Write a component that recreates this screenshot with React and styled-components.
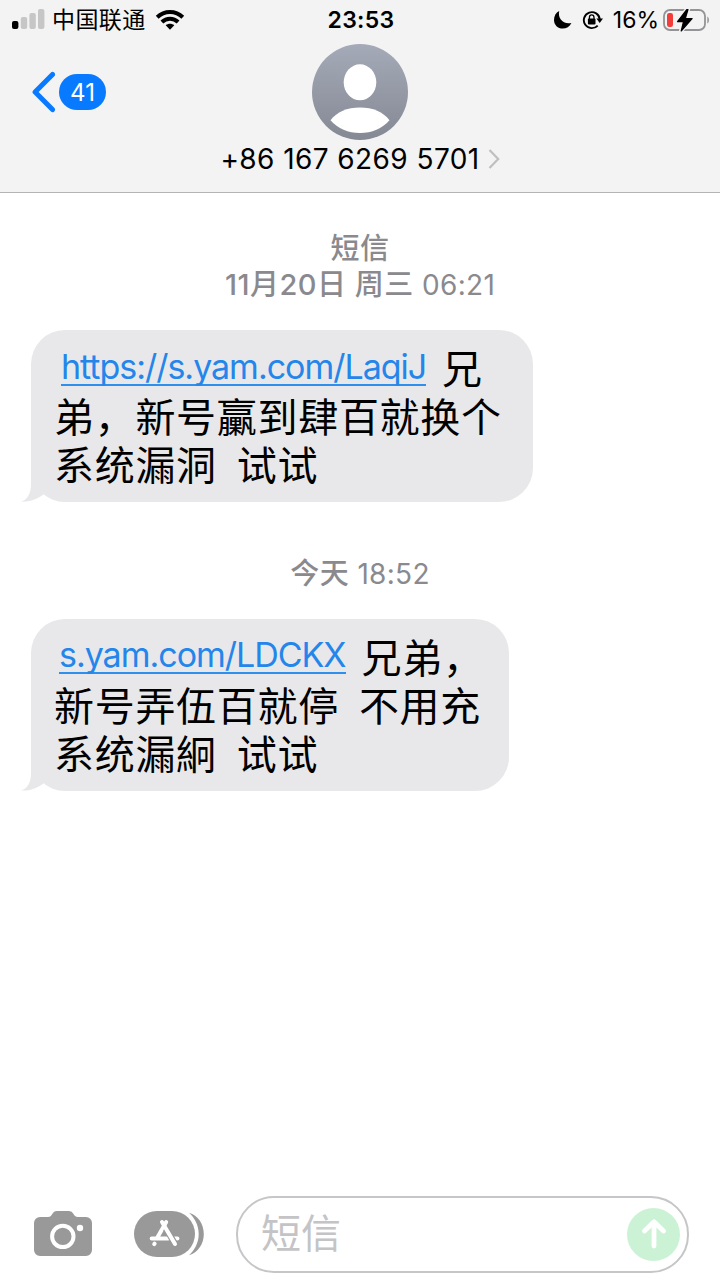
import styled, { createGlobalStyle } from "styled-components";

const GlobalStyle = createGlobalStyle`
* {
    box-sizing: border-box;
}
body {
    margin: 0;
    background: #fff;
    color: #000;
    font-family: Inter, "Noto Sans CJK SC", sans-serif;
}
`;

const messages = [
    {
        id: 1,
        service: "短信",
        date: "11月20日 周三",
        time: "06:21",
        width: 502,
        link: { text: "https://s.yam.com/LaqiJ", indent: 7, lift: 3 },
        first: "兄",
        rest: [["弟，新号臝到肆百就换个"], ["系统漏洞", "试试"]],
    },
    {
        id: 2,
        date: "今天",
        time: "18:52",
        width: 478,
        link: { text: "s.yam.com/LDCKX", indent: 5, lift: 4 },
        first: "兄弟，",
        rest: [["新号弄伍百就停", "不用充"], ["系统漏絅", "试试"]],
    },
];

/**
 * STATUS BAR ICONS
 */

const Signal = () => (
    <svg width="33" height="22" viewBox="0 0 33 22">
        <rect x="0" y="12" width="6.4" height="8" rx="2" fill="#000" />
        <rect x="8.8" y="8" width="6.4" height="12" rx="2" fill="#c6c6c7" />
        <rect x="17.4" y="4" width="6.4" height="16" rx="2" fill="#c6c6c7" />
        <rect x="26" y="0" width="6.4" height="20" rx="2" fill="#c6c6c7" />
    </svg>
);

const Wifi = () => (
    <svg width="30" height="22" viewBox="0 0 30 22">
        <g fill="none" stroke="#000" strokeWidth="4">
            <path d="M2.2 8.2C9.4 1.2 20.6 1.2 27.8 8.2" />
            <path d="M6.9 13C11.5 8.6 18.5 8.6 23.1 13" />
        </g>
        <path d="M10.7 16.3C13.2 14.3 16.8 14.3 19.3 16.3L15 20.8Z" />
    </svg>
);

const Moon = () => (
    <svg width="20" height="20" viewBox="0 0 20 20">
        <path d="M6.2 1C4.6 8.5 10 14.6 18.4 12.9C16.6 16.7 13.4 18.6 9.8 18.6C4.8 18.6 1 14.9 1 10C1 6 2.9 2.6 6.2 1Z" />
    </svg>
);

const RotationLock = () => (
    <svg width="22" height="20" viewBox="0 0 22 20">
        <path d="M15.7 15.6A8 8 0 1 1 17.8 9.4" fill="none" stroke="#000" strokeWidth="1.9" />
        <path d="M14.4 8.5H21L17.7 13Z" />
        <rect x="5.9" y="8.6" width="7.6" height="6" rx="1" />
        <path d="M7.4 9V7.4A2.3 2.5 0 0 1 12 7.4V9" fill="none" stroke="#000" strokeWidth="1.3" />
    </svg>
);

const Battery = () => (
    <svg width="47" height="26" viewBox="0 0 47 26">
        <rect x="1" y="3" width="41" height="20" rx="6" fill="none" stroke="#949496" strokeWidth="1.8" />
        <path d="M44.3 9.5C46.5 10.5 46.5 15.5 44.3 16.5Z" fill="#949496" />
        <rect x="4" y="6" width="6" height="14" rx="2.2" fill="#f23d3b" />
        <path d="M23.8 2L13.6 15H20L17.4 25L29.8 11.3H22.6L25.5 2Z" stroke="#f3f3f3" strokeWidth="3.4" fill="#f3f3f3" />
        <path d="M23.8 2.6L14.6 14.6H20.6L18.3 23.8L29 11.6H22.2L24.9 2.6Z" stroke="#000" strokeWidth="1.4" strokeLinejoin="round" />
    </svg>
);

/**
 * HEADER AND TOOLBAR ICONS
 */

const BackArrow = () => (
    <svg width="26" height="42" viewBox="0 0 26 42">
        <path d="M21.5 3.4L4.1 21L21.5 38.6" fill="none" stroke="#087aff" strokeWidth="5" strokeLinecap="round" strokeLinejoin="round" />
    </svg>
);

const Avatar = () => (
    <svg width="96" height="96" viewBox="0 0 96 96">
        <defs>
            <linearGradient id="avatar" x1="0" y1="0" x2="0" y2="1">
                <stop offset="0" stopColor="#a5aab8" />
                <stop offset="1" stopColor="#858994" />
            </linearGradient>
        </defs>
        <circle cx="48" cy="48" r="48" fill="url(#avatar)" />
        <ellipse cx="48" cy="38.3" rx="16.3" ry="18" fill="#fff" />
        <path d="M18.5 76.2C25 68 35 63.6 48 63.6S71 68 77.5 76.2C70 84.5 60 89 48 89S26 84.5 18.5 76.2Z" fill="#fff" />
    </svg>
);

const Chevron = () => (
    <svg width="12" height="20" viewBox="0 0 12 20">
        <path d="M1.5 1L10.2 10L1.5 19" fill="none" stroke="#bfbfc1" strokeWidth="2.2" />
    </svg>
);

const Tail = () => (
    <svg width="34" height="34" viewBox="0 0 34 34">
        <path d="M10 0V16C10 25 7 31.5 0 33.4C8 34.2 16 31.6 23 26L34 10V0Z" fill="#e8e8ea" />
    </svg>
);

const Camera = () => (
    <svg width="58" height="46" viewBox="0 0 58 46">
        <path d="M6 6H14C16.5 6 17.5 4.5 18.6 2.6C19.7 .7 21 0 23 0H34.5C36.7 0 38 .7 39.2 2.6C40.4 4.6 41.4 6 44 6H52A6 6 0 0 1 58 12V39A6 6 0 0 1 52 45H6A6 6 0 0 1 0 39V12A6 6 0 0 1 6 6Z" fill="#999" />
        <circle cx="28.8" cy="25.4" r="10.7" fill="none" stroke="#fff" strokeWidth="4" />
        <circle cx="46" cy="17" r="3.2" fill="#fff" />
    </svg>
);

const AppStore = () => (
    <svg width="70" height="46" viewBox="0 0 70 46">
        <rect x="0" y="0" width="61" height="46" rx="23" fill="#999" />
        <path d="M55 1.8C64 4.5 69.8 13 69.8 23S64 41.5 55 44.2C60.7 39.2 64.7 31.5 64.7 23S60.7 6.8 55 1.8Z" fill="#999" />
        <g fill="none" stroke="#fff" strokeWidth="4" strokeLinecap="round">
            <path d="M32.2 11L23.4 26.6" />
            <path d="M17.7 27.6H34.2" />
            <path d="M39.5 27.6H43.4" />
            <path d="M20.6 32.6L20.2 33.2" />
            <path d="M32 17.4L41 33" stroke="#999" strokeWidth="6.4" strokeLinecap="butt" />
            <path d="M28 11L41 33" />
        </g>
    </svg>
);

const SendArrow = () => (
    <svg width="26" height="32" viewBox="0 0 26 32">
        <path d="M13 28V4M3.5 13L13 3.8L22.5 13" fill="none" stroke="#fff" strokeWidth="4.8" strokeLinecap="round" strokeLinejoin="round" />
    </svg>
);

/**
 * ONE RECEIVED MESSAGE WITH ITS TIMESTAMP
 */

const Message = ({ service, date, time, width, link, first, rest }) => (
    <Entry>
        <Stamp>
            {service && <StampLine><b>{service}</b></StampLine>}
            <StampLine><b>{date}</b> {time}</StampLine>
        </Stamp>
        <Bubble $width={width}>
            <Line>
                <MessageLink href="#" $indent={link.indent} $lift={link.lift}>{link.text}</MessageLink>
                <span>{first}</span>
            </Line>
            {rest.map((parts) => (
                <Line key={parts[0]} $gap="20px">
                    {parts.map((part) => <span key={part}>{part}</span>)}
                </Line>
            ))}
            <TailHolder><Tail /></TailHolder>
        </Bubble>
    </Entry>
);

const App = () => {
    return (
        <Screen>
            <GlobalStyle />
            <Header>
                <StatusBar>
                    <StatusSide>
                        <Signal />
                        <Carrier>中国联通</Carrier>
                        <Wifi />
                    </StatusSide>
                    <Clock>23:53</Clock>
                    <StatusSide $end>
                        <Moon />
                        <RotationLock />
                        <Percent>16%</Percent>
                        <Battery />
                    </StatusSide>
                </StatusBar>
                <Contact>
                    <BackButton type="button">
                        <BackArrow />
                        <Unread>41</Unread>
                    </BackButton>
                    <Avatar />
                </Contact>
                <PhoneNumber>
                    <span>+86 167 6269 5701</span>
                    <Chevron />
                </PhoneNumber>
            </Header>
            <Thread>
                {messages.map((message) => <Message key={message.id} {...message} />)}
            </Thread>
            <Toolbar>
                <Camera />
                <AppStore />
                <Field>
                    <Placeholder>短信</Placeholder>
                    <SendButton type="button"><SendArrow /></SendButton>
                </Field>
            </Toolbar>
        </Screen>
    );
};

const Screen = styled.div`
width: 720px;
height: 1280px;
display: flex;
flex-direction: column;
overflow: hidden;

svg {
    display: block;
    flex: none;
}
`;

const Header = styled.header`
height: 193px;
flex: none;
background: #f3f3f3;
border-bottom: 1px solid #b4b4b5;
`;

const StatusBar = styled.div`
height: 40px;
display: grid;
grid-template-columns: 1fr auto 1fr;
align-items: center;
padding: 0 10px 0 12px;
white-space: nowrap;
`;

const StatusSide = styled.div`
display: flex;
align-items: center;
justify-content: ${({ $end }) => ($end ? "flex-end" : "flex-start")};
gap: 9px;
`;

const Carrier = styled.span`
margin-left: -2px;
font-size: 23px;
line-height: 40px;
letter-spacing: 0.4px;
`;

const Clock = styled.span`
font-size: 23px;
font-weight: 600;
letter-spacing: 0.3px;
`;

const Percent = styled.span`
margin-right: -5px;
font-size: 23px;
`;

const Contact = styled.div`
height: 100px;
padding-top: 4px;
display: grid;
grid-template-columns: 1fr 96px 1fr;
align-items: center;
`;

const BackButton = styled.button`
display: flex;
align-items: center;
gap: 2px;
padding: 0 0 0 31px;
border: 0;
background: none;
font-family: inherit;
`;

const Unread = styled.span`
width: 47px;
height: 36px;
border-radius: 18px;
background: #087aff;
color: #fff;
font-size: 24px;
line-height: 37px;
text-align: center;
`;

const PhoneNumber = styled.div`
height: 38px;
display: flex;
align-items: center;
justify-content: center;
gap: 8px;
font-size: 28px;
letter-spacing: 0.42px;
`;

const Thread = styled.main`
flex: 1;
padding: 38px 0 0 31px;
`;

const Entry = styled.section`
margin-bottom: 54px;
`;

const Stamp = styled.div`
margin: 0 31px 27px 0;
color: #8a8a8e;
font-size: 28px;
letter-spacing: 0.3px;
text-align: center;

b {
    font-size: 29px;
    font-weight: 500;
    letter-spacing: 0.5px;
}
`;

const StampLine = styled.div`
height: 36px;
line-height: 36px;
white-space: nowrap;
`;

const Bubble = styled.div`
position: relative;
width: ${({ $width }) => $width}px;
height: 172px;
padding: 14px 0 14px 23px;
border-radius: 34px;
background: #e8e8ea;
`;

const Line = styled.div`
height: 48px;
display: flex;
gap: ${({ $gap }) => $gap || 0};
font-family: "Noto Sans CJK SC", sans-serif;
font-size: 40px;
line-height: 47px;
letter-spacing: 0.7px;
white-space: nowrap;
`;

const MessageLink = styled.a`
height: 36px;
margin: ${({ $lift }) => 9 - $lift}px 16px 0 ${({ $indent }) => $indent}px;
border-bottom: 2px solid #2f8fee;
color: #2486ea;
font-family: Inter, sans-serif;
font-size: 34px;
line-height: 34px;
letter-spacing: -1.02px;
text-decoration: none;
`;

const TailHolder = styled.div`
position: absolute;
left: -10px;
bottom: 0;
z-index: -1;
`;

const Toolbar = styled.footer`
height: 92px;
flex: none;
display: flex;
align-items: center;
padding: 0 31px 0 34px;

svg + svg {
    margin-left: 42px;
}
`;

const Field = styled.div`
flex: 1;
height: 77px;
margin-left: 32px;
display: flex;
align-items: center;
justify-content: space-between;
padding: 0 7px 0 23px;
border: 2px solid #c6c6c8;
border-radius: 38px;
`;

const Placeholder = styled.span`
color: #c4c4c6;
font-size: 40px;
line-height: 60px;
`;

const SendButton = styled.button`
width: 53px;
height: 53px;
display: flex;
align-items: center;
justify-content: center;
padding: 0;
border: 0;
border-radius: 50%;
background: #ccf2d6;
`;

export default App;
